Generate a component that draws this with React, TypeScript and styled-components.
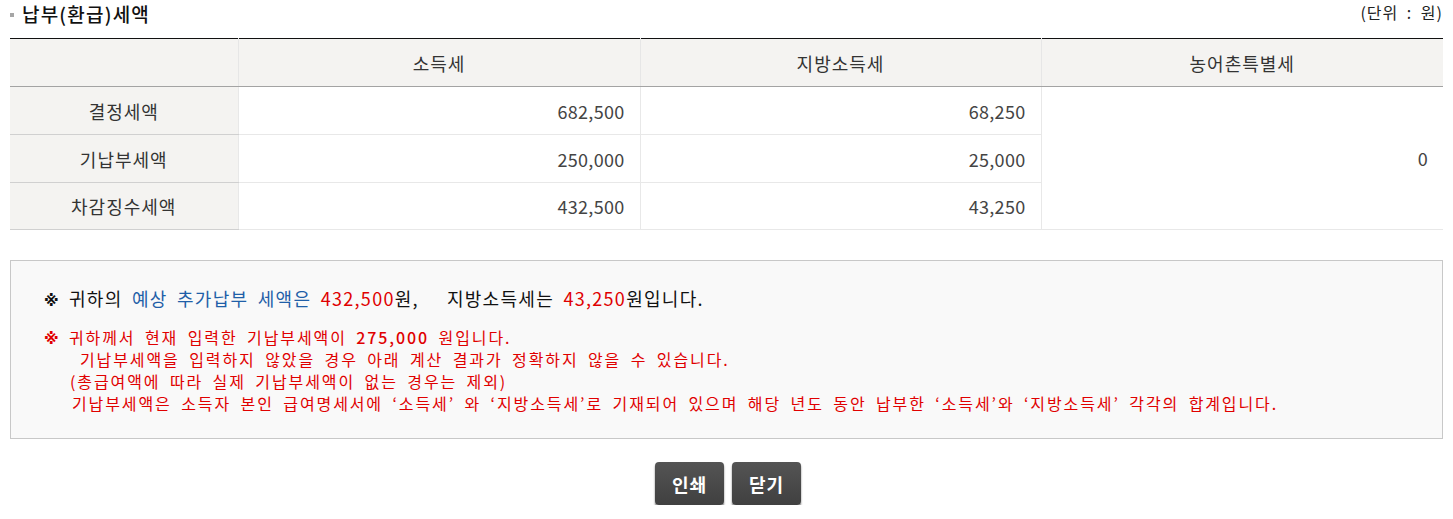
import React from "react";
import styled, { createGlobalStyle } from "styled-components";

const GlobalStyle = createGlobalStyle`
  html, body { margin: 0; padding: 0; background: #fff; }
  body { font-family: "Noto Sans CJK KR", "Noto Sans", sans-serif; color: #333; }
  * { box-sizing: border-box; }
`;

const Page = styled.div`
  padding: 0 10px;
  width: 1453px;
`;

const TitleBar = styled.div`
  height: 38px;
  display: flex;
  justify-content: space-between;
  align-items: flex-start;
`;

const Title = styled.h2`
  margin: 0;
  padding-top: 2px;
  display: flex;
  align-items: center;
  gap: 8px;
  font-size: 19px;
  line-height: 24px;
  font-weight: 500;
  color: #111;
  letter-spacing: 1.2px;
`;

const Bullet = styled.span`
  width: 4px;
  height: 4px;
  background: #a6a6a6;
  display: inline-block;
  margin-top: 2px;
`;

const Unit = styled.span`
  font-size: 16px;
  line-height: 22px;
  color: #222;
  padding-top: 1px;
  letter-spacing: 1px;
  word-spacing: 4px;
`;

const Table = styled.table`
  width: 100%;
  border-collapse: collapse;
  border-top: 1px solid #111;
  table-layout: fixed;
`;

const HeadCell = styled.th`
  height: 48px;
  background: #f4f3f1;
  border-bottom: 1px solid #a3a3a3;
  border-left: 1px solid #e6e6e6;
  font-size: 18px;
  font-weight: 400;
  color: #333;
  letter-spacing: 1px;
  &:first-child { border-left: none; }
`;

const LabelCell = styled.th<{ $h: number }>`
  height: ${(p) => p.$h}px;
  background: #f4f3f1;
  border-bottom: 1px solid #d0d0d0;
  font-size: 18px;
  font-weight: 400;
  color: #333;
  letter-spacing: 1px;
`;

const ValueCell = styled.td`
  text-align: right;
  padding-right: 15px;
  border-bottom: 1px solid #e8e8e8;
  border-left: 1px solid #e8e8e8;
  font-size: 18px;
  letter-spacing: 0.3px;
  color: #444;
`;

const InfoBox = styled.div`
  margin-top: 30px;
  border: 1px solid #c8c8c8;
  background: #f9f9f9;
  padding: 25px 33px 24px;
`;

const Lead = styled.p`
  margin: 0 0 16px;
  font-size: 18px;
  line-height: 24px;
  color: #111;
  font-weight: 400;
  letter-spacing: 1.3px;
  word-spacing: 4px;
`;

const Mark = styled.span<{ $red?: boolean }>`
  display: inline-block;
  font-family: "DejaVu Sans", sans-serif;
  font-size: 15px;
  line-height: 14px;
  font-weight: 700;
  width: 14px;
  margin-right: 11px;
  letter-spacing: 0;
  color: ${(p) => (p.$red ? "#e00000" : "#111")};
`;

const Blue = styled.span`
  color: #1f5fa8;
`;

const Red = styled.span<{ $bold?: boolean }>`
  color: #e00000;
  font-weight: ${(p) => (p.$bold ? 500 : "inherit")};
`;

const NoteLine = styled.p<{ $indent: number }>`
  margin: 0;
  height: 22px;
  padding-left: ${(p) => p.$indent}px;
  font-size: 16px;
  line-height: 22px;
  color: #e00000;
  letter-spacing: 1.9px;
  word-spacing: 4px;
  white-space: nowrap;
`;

const Buttons = styled.div`
  margin-top: 23px;
  display: flex;
  justify-content: center;
  gap: 8px;
  padding-left: 3px;
`;

const Button = styled.button`
  width: 69px;
  height: 43px;
  border: none;
  border-radius: 4px;
  background: linear-gradient(#545454, #404040);
  box-shadow: 0 2px 2px rgba(0, 0, 0, 0.55);
  color: #fff;
  font-family: "Noto Sans CJK KR", sans-serif;
  font-size: 18px;
  font-weight: 700;
  letter-spacing: 1px;
  cursor: pointer;
`;

const rows = [
  { label: "결정세액", income: "682,500", local: "68,250", h: 48 },
  { label: "기납부세액", income: "250,000", local: "25,000", h: 48 },
  { label: "차감징수세액", income: "432,500", local: "43,250", h: 47 },
];

export default function App() {
  return (
    <Page>
      <GlobalStyle />
      <TitleBar>
        <Title>
          <Bullet />
          납부(환급)세액
        </Title>
        <Unit>(단위 : 원)</Unit>
      </TitleBar>
      <Table>
        <colgroup>
          <col style={{ width: 228 }} />
          <col style={{ width: 402 }} />
          <col style={{ width: 401 }} />
          <col style={{ width: 402 }} />
        </colgroup>
        <thead>
          <tr>
            <HeadCell />
            <HeadCell>소득세</HeadCell>
            <HeadCell>지방소득세</HeadCell>
            <HeadCell>농어촌특별세</HeadCell>
          </tr>
        </thead>
        <tbody>
          {rows.map((r, i) => (
            <tr key={r.label}>
              <LabelCell $h={r.h}>{r.label}</LabelCell>
              <ValueCell>{r.income}</ValueCell>
              <ValueCell>{r.local}</ValueCell>
              {i === 0 && <ValueCell rowSpan={3}>0</ValueCell>}
            </tr>
          ))}
        </tbody>
      </Table>
      <InfoBox>
        <Lead>
          <Mark>※</Mark>귀하의 <Blue>예상 추가납부 세액은</Blue> <Red>432,500</Red>원,
          &nbsp; 지방소득세는 <Red>43,250</Red>원입니다.
        </Lead>
        <NoteLine $indent={0}>
          <Mark $red>※</Mark>귀하께서 현재 입력한 기납부세액이 <Red $bold>275,000</Red> 원입니다.
        </NoteLine>
        <NoteLine $indent={36}>
          기납부세액을 입력하지 않았을 경우 아래 계산 결과가 정확하지 않을 수 있습니다.
        </NoteLine>
        <NoteLine $indent={26}>(총급여액에 따라 실제 기납부세액이 없는 경우는 제외)</NoteLine>
        <NoteLine $indent={28}>
          기납부세액은 소득자 본인 급여명세서에 ‘소득세’ 와 ‘지방소득세’로 기재되어 있으며 해당 년도 동안 납부한
          ‘소득세’와 ‘지방소득세’ 각각의 합계입니다.
        </NoteLine>
      </InfoBox>
      <Buttons>
        <Button>인쇄</Button>
        <Button>닫기</Button>
      </Buttons>
    </Page>
  );
}
